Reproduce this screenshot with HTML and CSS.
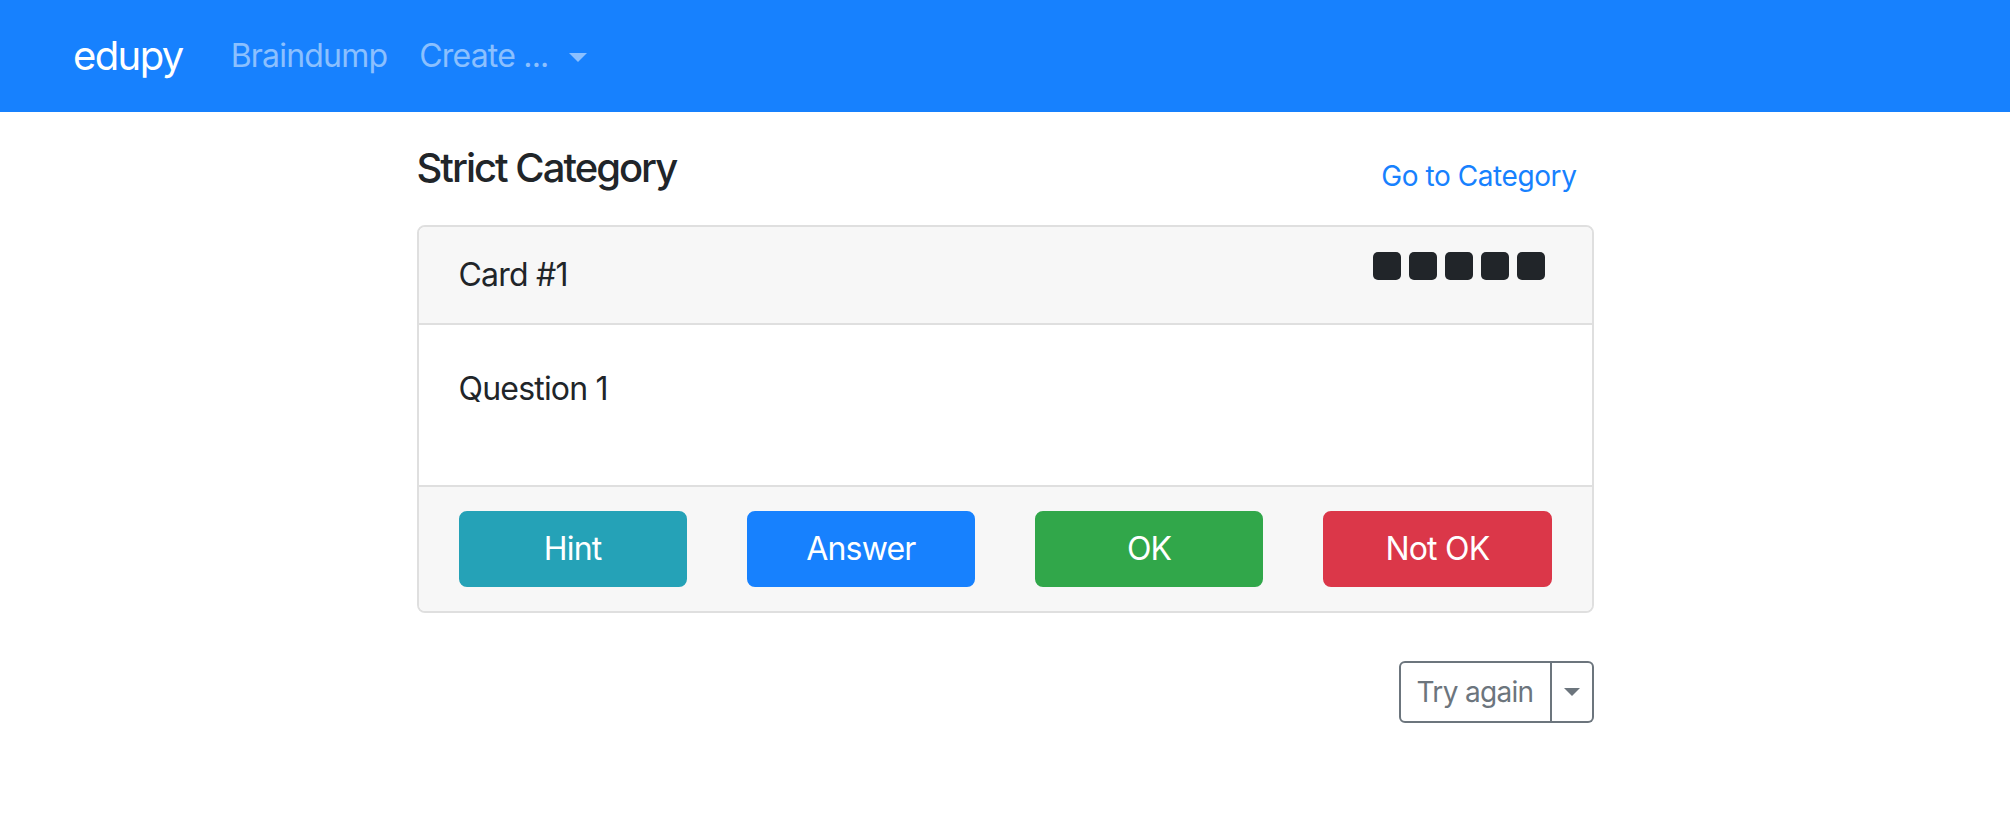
FILE: index.html
```html
<!DOCTYPE html>
<html lang="en">
<head>
<meta charset="utf-8">
<title>edupy</title>
<link rel="stylesheet" href="styles.css">
</head>
<body>
<nav class="navbar">
  <a class="brand" href="#">edupy</a>
  <ul class="nav">
    <li><a class="nav-link" href="#">Braindump</a></li>
    <li><a class="nav-link dropdown-toggle" href="#">Create ...</a></li>
  </ul>
</nav>
<main class="container">
  <div class="page-head">
    <h5 class="page-title">Strict Category</h5>
    <a class="head-link" href="#">Go to Category</a>
  </div>
  <div class="card">
    <div class="card-header">
      <span class="card-title">Card #1</span>
      <div class="level">
        <span class="pip"></span><span class="pip"></span><span class="pip"></span><span class="pip"></span><span class="pip"></span>
      </div>
    </div>
    <div class="card-body">
      <p class="question">Question 1</p>
    </div>
    <div class="card-footer">
      <div class="actions">
        <button class="btn btn-info">Hint</button>
        <button class="btn btn-primary">Answer</button>
        <button class="btn btn-success">OK</button>
        <button class="btn btn-danger">Not OK</button>
      </div>
    </div>
  </div>
  <div class="retry-row">
    <div class="btn-group">
      <button class="btn-retry">Try again</button>
      <button class="btn-split"><span class="caret"></span></button>
    </div>
  </div>
</main>
</body>
</html>
```

FILE: styles.css
```css
* { box-sizing: border-box; }
html, body { margin: 0; padding: 0; }
body {
  font-family: Inter, "Noto Sans", "Liberation Sans", sans-serif;
  font-size: 32px;
  line-height: 48px;
  letter-spacing: -0.025em;
  color: #212529;
  background: #fff;
}
a { text-decoration: none; }

.navbar {
  display: flex;
  align-items: center;
  height: 112px;
  padding: 16px 32px 16px 73px;
  background: #1781fe;
}
.brand {
  color: #fff;
  font-size: 40px;
  line-height: 60px;
  letter-spacing: -0.04em;
  padding: 10px 0;
  margin-right: 32px;
}
.nav {
  display: flex;
  list-style: none;
  margin: 0;
  padding: 0;
}
.nav-link {
  display: block;
  padding: 16px 16px;
  color: rgba(255, 255, 255, 0.5);
}
.dropdown-toggle::after {
  content: "";
  display: inline-block;
  margin-left: 20px;
  vertical-align: 5px;
  border-top: 9.6px solid;
  border-left: 9.6px solid transparent;
  border-right: 9.6px solid transparent;
}

.container {
  width: 1177px;
  margin: 0 auto;
}
.page-head {
  display: flex;
  justify-content: space-between;
  align-items: flex-start;
  margin-top: 32px;
  height: 81px;
}
.page-title {
  margin: 0;
  font-size: 40px;
  line-height: 48px;
  font-weight: 500;
  letter-spacing: -0.05em;
}
.head-link {
  margin-top: 11px;
  margin-right: 17px;
  font-size: 28px;
  line-height: 42px;
  letter-spacing: -0.015em;
  color: #1781fe;
}

.card {
  border: 2px solid #dfdfdf;
  border-radius: 8px;
  overflow: hidden;
}
.card-header {
  display: flex;
  justify-content: space-between;
  align-items: flex-start;
  padding: 24px 40px;
  background: #f7f7f7;
  border-bottom: 2px solid #dfdfdf;
}
.level {
  display: flex;
  gap: 8px;
  margin-top: 1px;
  margin-right: 7px;
}
.pip {
  width: 28px;
  height: 28px;
  border-radius: 5px;
  background: #212529;
}
.card-body {
  padding: 40px;
}
.question {
  margin: 0 0 32px;
}
.card-footer {
  padding: 24px 40px;
  background: #f7f7f7;
  border-top: 2px solid #dfdfdf;
}
.actions {
  display: grid;
  grid-template-columns: repeat(4, 1fr);
  gap: 60px;
}
.btn {
  font: inherit;
  letter-spacing: inherit;
  color: #fff;
  border: 2px solid transparent;
  border-radius: 8px;
  padding: 12px 24px;
  line-height: 48px;
  text-align: center;
}
.btn-info { background: #25a2b7; border-color: #25a2b7; }
.btn-primary { background: #1781fe; border-color: #1781fe; }
.btn-success { background: #31a74a; border-color: #31a74a; }
.btn-danger { background: #db3749; border-color: #db3749; }

.retry-row {
  display: flex;
  justify-content: flex-end;
  margin-top: 48px;
}
.btn-group {
  display: flex;
}
.btn-retry, .btn-split {
  font-family: inherit;
  font-size: 28px;
  line-height: 42px;
  letter-spacing: -0.024em;
  color: #6c757d;
  background: #fff;
  border: 2px solid #6c757d;
}
.btn-retry {
  padding: 8px 16px;
  border-radius: 6px 0 0 6px;
}
.btn-split {
  display: flex;
  align-items: center;
  padding: 8px 12px;
  border-left: 0;
  border-radius: 0 6px 6px 0;
}
.caret {
  display: block;
  border-top: 8px solid #6c757d;
  border-left: 8px solid transparent;
  border-right: 8px solid transparent;
}
```
